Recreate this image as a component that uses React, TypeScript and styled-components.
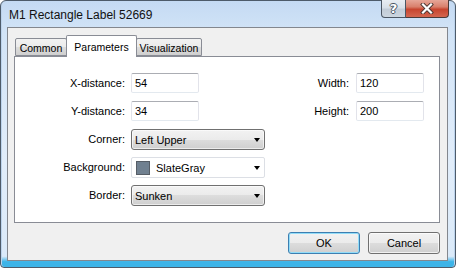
import React from "react";
import styled, { createGlobalStyle } from "styled-components";

const GlobalStyle = createGlobalStyle`
  html, body {
    margin: 0;
    padding: 0;
    background: #ffffff;
  }
  body {
    font-family: "Liberation Sans", Arial, sans-serif;
    font-size: 11px;
    color: #000;
  }
`;

const tabs = [
  { label: "Common", width: 52 },
  { label: "Parameters", width: 71 },
  { label: "Visualization", width: 66 },
];

const App: React.FC = () => {
  return (
    <>
      <GlobalStyle />
      <Window>
        <TitleBar>
          <Title>M1 Rectangle Label 52669</Title>
          <CaptionButtons>
            <HelpButton>?</HelpButton>
            <CloseButton>
              <svg width="18" height="11" viewBox="0 0 18 11">
                <path
                  d="M5 1.5 L13 9.5 M13 1.5 L5 9.5"
                  stroke="#4a3632"
                  strokeWidth="4"
                  strokeLinecap="square"
                />
                <path
                  d="M5 1.5 L13 9.5 M13 1.5 L5 9.5"
                  stroke="#ffffff"
                  strokeWidth="2.2"
                  strokeLinecap="square"
                />
              </svg>
            </CloseButton>
          </CaptionButtons>
        </TitleBar>

        <Client>
          <TabStrip>
            {tabs.map((t) => (
              <Tab
                key={t.label}
                $active={t.label === "Parameters"}
                $w={t.width}
              >
                {t.label}
              </Tab>
            ))}
          </TabStrip>

          <Panel>
            <LeftGrid>
              <Label>X-distance:</Label>
              <Field>
                <TextBox>54</TextBox>
              </Field>

              <Label>Y-distance:</Label>
              <Field>
                <TextBox>34</TextBox>
              </Field>

              <Label>Corner:</Label>
              <Combo>
                <ComboText>Left Upper</ComboText>
                <Arrow />
              </Combo>

              <Label>Background:</Label>
              <ColorCombo>
                <Swatch $color="#708090" />
                <ComboText>SlateGray</ComboText>
                <Arrow />
              </ColorCombo>

              <Label>Border:</Label>
              <Combo>
                <ComboText>Sunken</ComboText>
                <Arrow />
              </Combo>
            </LeftGrid>

            <RightGrid>
              <Label>Width:</Label>
              <TextBox>120</TextBox>
              <Label>Height:</Label>
              <TextBox>200</TextBox>
            </RightGrid>
          </Panel>

          <ButtonRow>
            <DialogButton $default>OK</DialogButton>
            <DialogButton>Cancel</DialogButton>
          </ButtonRow>
        </Client>
      </Window>
    </>
  );
};

export default App;

// Styled Components

const Window = styled.div`
  box-sizing: border-box;
  width: 456px;
  height: 268px;
  display: flex;
  flex-direction: column;
  border: 1px solid #4d5b6a;
  border-radius: 6px 6px 4px 4px;
  padding: 0 7px 6px 6px;
  background: linear-gradient(
    180deg,
    #c4daf3 0%,
    #d2e4f7 12%,
    #e1edfa 60%,
    #dbeaf9 96%,
    #3db4e8 98%,
    #3db4e8 100%
  );
  box-shadow: inset 1px 0 0 #bcd3ec, inset -1px 0 0 #bcd3ec;
`;

const TitleBar = styled.div`
  height: 26px;
  display: flex;
  align-items: flex-start;
  justify-content: space-between;
  padding-left: 2px;
`;

const Title = styled.div`
  font-family: "Liberation Sans", Arial, sans-serif;
  font-size: 12px;
  line-height: 14px;
  margin-top: 7px;
  color: #111;
`;

const CaptionButtons = styled.div`
  display: flex;
  margin-top: -1px;
  margin-right: -1px;
`;

const HelpButton = styled.div`
  box-sizing: border-box;
  width: 25px;
  height: 18px;
  border: 1px solid #4b5663;
  border-top: none;
  border-radius: 0 0 0 4px;
  background: linear-gradient(180deg, #e8edf2 0%, #d8e0e8 45%, #c2ccd7 55%, #ccd6e0 100%);
  display: flex;
  align-items: center;
  justify-content: center;
  font-family: "DejaVu Sans", sans-serif;
  font-weight: bold;
  font-size: 13px;
  color: #ffffff;
  text-shadow: 1px 0 0 #4a5563, -1px 0 0 #4a5563, 0 1px 0 #4a5563, 0 -1px 0 #4a5563;
`;

const CloseButton = styled.div`
  box-sizing: border-box;
  width: 43px;
  height: 18px;
  border: 1px solid #4b3a38;
  border-left: none;
  border-top: none;
  border-radius: 0 0 4px 0;
  background: linear-gradient(180deg, #e6a698 0%, #d9806c 40%, #c7452f 55%, #d4664f 100%);
  display: flex;
  align-items: center;
  justify-content: center;
`;

const Client = styled.div`
  flex: 1;
  display: flex;
  flex-direction: column;
  border: 1px solid #83878e;
  background: #f0f0f0;
  padding: 7px 7px 6px 6px;
`;

const TabStrip = styled.div`
  height: 21px;
  display: flex;
  align-items: flex-end;
  padding-left: 1px;
`;

const Tab = styled.div<{ $active?: boolean; $w: number }>`
  box-sizing: border-box;
  position: relative;
  width: ${(p) => p.$w}px;
  height: ${(p) => (p.$active ? 22 : 18)}px;
  margin-bottom: ${(p) => (p.$active ? -1 : 0)}px;
  margin-left: ${(p) => (p.$active ? -1 : 0)}px;
  margin-right: ${(p) => (p.$active ? -1 : 0)}px;
  z-index: ${(p) => (p.$active ? 2 : 1)};
  border: 1px solid #898c95;
  border-bottom: ${(p) => (p.$active ? "none" : "1px solid #898c95")};
  border-radius: 2px 2px 0 0;
  background: ${(p) =>
    p.$active
      ? "#ffffff"
      : "linear-gradient(180deg, #f2f2f2 0%, #ebebeb 50%, #dddddd 50%, #cfcfcf 100%)"};
  display: flex;
  align-items: center;
  justify-content: center;
  padding-top: ${(p) => (p.$active ? 0 : 1)}px;
  font-size: 10.5px;
  white-space: nowrap;
`;

const Panel = styled.div`
  box-sizing: border-box;
  height: 167px;
  border: 1px solid #898c95;
  background: #ffffff;
  display: flex;
  align-items: flex-start;
  padding-top: 16px;
`;

const LeftGrid = styled.div`
  display: grid;
  grid-template-columns: 110px 134px;
  grid-auto-rows: 21px;
  column-gap: 6px;
  row-gap: 7px;
`;

const RightGrid = styled.div`
  margin-left: auto;
  margin-right: 15px;
  display: grid;
  grid-template-columns: auto 68px;
  grid-auto-rows: 21px;
  column-gap: 7px;
  row-gap: 7px;
`;

const Label = styled.div`
  display: flex;
  align-items: center;
  justify-content: flex-end;
  height: 20px;
  white-space: nowrap;
`;

const Field = styled.div`
  display: flex;
`;

const TextBox = styled.div`
  box-sizing: border-box;
  width: 68px;
  height: 20px;
  border: 1px solid #e2e3ea;
  border-top-color: #abadb3;
  border-bottom-color: #e3e9ef;
  border-radius: 2px;
  background: #ffffff;
  display: flex;
  align-items: center;
  padding-left: 3px;
`;

const Combo = styled.div`
  box-sizing: border-box;
  width: 134px;
  height: 21px;
  border: 1px solid #707070;
  border-radius: 3px;
  background: linear-gradient(180deg, #f2f2f2 0%, #ebebeb 50%, #dddddd 50%, #cfcfcf 100%);
  box-shadow: inset 0 0 0 1px rgba(255, 255, 255, 0.6);
  display: flex;
  align-items: center;
  padding: 0 4px 0 3px;
`;

const ColorCombo = styled(Combo)`
  border-color: #dcdfe5;
  border-radius: 2px;
  background: #ffffff;
  box-shadow: none;
  padding-left: 4px;
`;

const ComboText = styled.span`
  flex: 1;
  white-space: nowrap;
`;

const Swatch = styled.span<{ $color: string }>`
  box-sizing: border-box;
  width: 14px;
  height: 14px;
  margin-right: 6px;
  background: ${(p) => p.$color};
  border: 1px solid #565d66;
`;

const Arrow = styled.span`
  width: 0;
  height: 0;
  border-left: 3.5px solid transparent;
  border-right: 3.5px solid transparent;
  border-top: 4px solid #000;
`;

const ButtonRow = styled.div`
  display: flex;
  justify-content: flex-end;
  gap: 8px;
  margin-top: 9px;
`;

const DialogButton = styled.div<{ $default?: boolean }>`
  box-sizing: border-box;
  width: 72px;
  height: 22px;
  border: 1px solid ${(p) => (p.$default ? "#3c7fb1" : "#707070")};
  border-radius: 3px;
  background: linear-gradient(180deg, #f2f2f2 0%, #ebebeb 50%, #dddddd 50%, #cfcfcf 100%);
  box-shadow: inset 0 0 0 1px
    ${(p) => (p.$default ? "#92dcf8" : "rgba(255, 255, 255, 0.7)")};
  display: flex;
  align-items: center;
  justify-content: center;
`;
